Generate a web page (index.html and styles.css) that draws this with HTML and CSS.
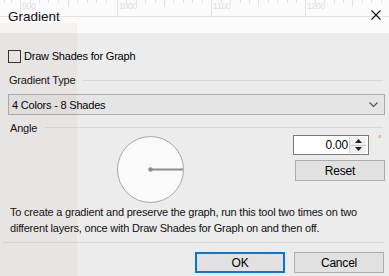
FILE: index.html
```html
<!DOCTYPE html>
<html>
<head>
<meta charset="utf-8">
<link rel="stylesheet" href="styles.css">
</head>
<body>
<div class="dialog">
  <div class="titlebar">
    <svg class="ruler" width="389" height="17" viewBox="0 0 389 17">
      <g stroke="#e2e2e2" stroke-width="1">
        <line x1="0" y1="16.5" x2="389" y2="16.5"/>
        <line x1="20.5" y1="0" x2="20.5" y2="16"/>
        <line x1="117.5" y1="0" x2="117.5" y2="16"/>
        <line x1="211.5" y1="0" x2="211.5" y2="16"/>
        <line x1="305.5" y1="0" x2="305.5" y2="16"/>
        <line x1="4.5" y1="0" x2="4.5" y2="3"/>
        <line x1="11.5" y1="0" x2="11.5" y2="3"/>
        <line x1="30.5" y1="0" x2="30.5" y2="3"/>
        <line x1="39.5" y1="0" x2="39.5" y2="3"/>
        <line x1="48.5" y1="0" x2="48.5" y2="3"/>
        <line x1="58.5" y1="0" x2="58.5" y2="3"/>
        <line x1="68.5" y1="0" x2="68.5" y2="7"/>
        <line x1="77.5" y1="0" x2="77.5" y2="3"/>
        <line x1="87.5" y1="0" x2="87.5" y2="3"/>
        <line x1="96.5" y1="0" x2="96.5" y2="3"/>
        <line x1="106.5" y1="0" x2="106.5" y2="3"/>
        <line x1="126.5" y1="0" x2="126.5" y2="3"/>
        <line x1="136.5" y1="0" x2="136.5" y2="3"/>
        <line x1="145.5" y1="0" x2="145.5" y2="3"/>
        <line x1="155.5" y1="0" x2="155.5" y2="3"/>
        <line x1="164.5" y1="0" x2="164.5" y2="7"/>
        <line x1="173.5" y1="0" x2="173.5" y2="3"/>
        <line x1="183.5" y1="0" x2="183.5" y2="3"/>
        <line x1="192.5" y1="0" x2="192.5" y2="3"/>
        <line x1="202.5" y1="0" x2="202.5" y2="3"/>
        <line x1="221.5" y1="0" x2="221.5" y2="3"/>
        <line x1="230.5" y1="0" x2="230.5" y2="3"/>
        <line x1="240.5" y1="0" x2="240.5" y2="3"/>
        <line x1="249.5" y1="0" x2="249.5" y2="3"/>
        <line x1="258.5" y1="0" x2="258.5" y2="7"/>
        <line x1="268.5" y1="0" x2="268.5" y2="3"/>
        <line x1="277.5" y1="0" x2="277.5" y2="3"/>
        <line x1="287.5" y1="0" x2="287.5" y2="3"/>
        <line x1="296.5" y1="0" x2="296.5" y2="3"/>
        <line x1="315.5" y1="0" x2="315.5" y2="3"/>
        <line x1="324.5" y1="0" x2="324.5" y2="3"/>
        <line x1="334.5" y1="0" x2="334.5" y2="3"/>
        <line x1="343.5" y1="0" x2="343.5" y2="3"/>
        <line x1="352.5" y1="0" x2="352.5" y2="7"/>
        <line x1="362.5" y1="0" x2="362.5" y2="3"/>
        <line x1="371.5" y1="0" x2="371.5" y2="3"/>
        <line x1="381.5" y1="0" x2="381.5" y2="3"/>
      </g>
      <g fill="#e0e0e0" font-family="Liberation Sans, sans-serif" font-size="8.5">
        <text x="22" y="8.5">900</text>
        <text x="119" y="8.5">1000</text>
        <text x="213" y="8.5">1100</text>
        <text x="307" y="8.5">1200</text>
      </g>
    </svg>
    <span class="title">Gradient</span>
    <svg class="close" width="10" height="10" viewBox="0 0 10 10">
      <path d="M0.5 0.5 L9.5 9.5 M9.5 0.5 L0.5 9.5" stroke="#111" stroke-width="1.1" fill="none"/>
    </svg>
  </div>
  <div class="content">
    <label class="check-row">
      <span class="checkbox"></span>
      <span>Draw Shades for Graph</span>
    </label>
    <div class="group-label">
      <span>Gradient Type</span>
      <span class="rule"></span>
    </div>
    <div class="select">
      <span>4 Colors - 8 Shades</span>
      <svg width="9" height="5" viewBox="0 0 9 5"><path d="M0.5 0.5 L4.5 4.5 L8.5 0.5" stroke="#555" stroke-width="1.1" fill="none"/></svg>
    </div>
    <div class="group-label angle-label">
      <span>Angle</span>
      <span class="rule"></span>
    </div>
    <div class="angle-area">
      <div class="dial">
        <svg width="69" height="69" viewBox="0 0 69 69">
          <circle cx="34.5" cy="34.5" r="33" fill="#fafafa" stroke="#a8a8a8" stroke-width="1"/>
          <line x1="34.5" y1="34.5" x2="67" y2="34.5" stroke="#8e8e8e" stroke-width="2"/>
          <circle cx="34.5" cy="34.5" r="2.3" fill="#8e8e8e"/>
        </svg>
      </div>
      <div class="controls">
        <div class="num-row">
          <div class="numeric">
            <span class="value">0.00</span>
            <div class="spin">
              <div class="spin-btn"><svg width="7" height="4" viewBox="0 0 7 4"><path d="M0 4 L3.5 0 L7 4Z" fill="#222"/></svg></div>
              <div class="spin-btn"><svg width="7" height="4" viewBox="0 0 7 4"><path d="M0 0 L3.5 4 L7 0Z" fill="#222"/></svg></div>
            </div>
          </div>
          <span class="deg">°</span>
        </div>
        <button class="btn reset">Reset</button>
      </div>
    </div>
    <p class="note">To create a gradient and preserve the graph, run this tool two times on two different layers, once with Draw Shades for Graph on and then off.</p>
    <div class="footer">
      <button class="btn default">OK</button>
      <button class="btn">Cancel</button>
    </div>
  </div>
  <div class="shade"></div>
</div>
</body>
</html>
```

FILE: styles.css
```css
html, body {
  margin: 0;
  padding: 0;
}
body {
  width: 389px;
  height: 276px;
  overflow: hidden;
  background: #ececec;
  font-family: "Liberation Sans", Arial, sans-serif;
  font-size: 11px;
  letter-spacing: -0.2px;
  color: #000;
}
.dialog {
  position: relative;
  width: 389px;
  height: 276px;
}
.titlebar {
  position: relative;
  height: 33px;
  background: #fbfbfb;
  display: flex;
  align-items: flex-end;
  justify-content: space-between;
  padding: 0 8px 0 8px;
  box-sizing: border-box;
}
.ruler {
  position: absolute;
  left: 0;
  top: 0;
}
.title {
  position: relative;
  font-family: "Liberation Sans", Arial, sans-serif;
  font-size: 13.5px;
  letter-spacing: 0;
  color: #111;
  line-height: 12px;
  margin-bottom: 10px;
}
.close {
  position: relative;
  margin-bottom: 13px;
  margin-right: 0;
}
.content {
  padding: 17px 4px 0 8px;
  display: flex;
  flex-direction: column;
}
.check-row {
  display: flex;
  align-items: center;
  gap: 3px;
  height: 13px;
  line-height: 13px;
}
.checkbox {
  width: 11px;
  height: 11px;
  border: 1px solid #333;
  background: transparent;
}
.group-label {
  display: flex;
  align-items: center;
  gap: 8px;
  margin-top: 10px;
  padding-left: 1px;
  height: 14px;
  color: #111;
}
.group-label .rule {
  flex: 1;
  height: 0;
  border-top: 1px solid #d8d8d8;
  margin-right: 2px;
}
.select {
  margin-top: 7px;
  height: 21px;
  box-sizing: border-box;
  border: 1px solid #adadad;
  background: #e5e5e5;
  display: flex;
  align-items: center;
  justify-content: space-between;
  padding: 0 6px 0 3px;
}
.angle-label {
  margin-top: 6px;
  height: 13px;
}
.angle-label span:first-child {
  margin-left: 1px;
}
.angle-area {
  display: flex;
  margin-top: 0px;
  height: 70px;
}
.dial {
  margin-left: 108px;
  margin-top: 1px;
}
.controls {
  margin-left: auto;
  width: 90px;
  display: flex;
  flex-direction: column;
  gap: 5px;
  margin-top: 1px;
}
.num-row {
  display: flex;
  align-items: flex-start;
  margin-left: -2px;
}
.numeric {
  width: 76px;
  height: 20px;
  box-sizing: border-box;
  border: 1px solid #7a7a7a;
  background: #fff;
  display: flex;
  align-items: center;
  justify-content: flex-end;
  padding: 1px;
  font-size: 12px;
}
.value {
  margin-right: 1px;
}
.spin {
  width: 16px;
  height: 16px;
  display: flex;
  flex-direction: column;
  border-left: 1px solid #d0d0d0;
  margin-right: 1px;
}
.spin-btn {
  flex: 1;
  display: flex;
  align-items: center;
  justify-content: center;
  background: #f0f0f0;
  border-bottom: 1px solid #c8c8c8;
}
.spin-btn:last-child {
  border-bottom: none;
}
.deg {
  color: #c08040;
  font-size: 9px;
  margin-left: 9px;
  margin-top: -1px;
}
.btn {
  height: 21px;
  width: 90px;
  box-sizing: border-box;
  border: 1px solid #adadad;
  background: #e1e1e1;
  font-family: inherit;
  font-size: 12px;
  letter-spacing: -0.2px;
  color: #000;
  padding: 0;
}
.note {
  margin: 0;
  padding-left: 2px;
  line-height: 16px;
  color: #111;
}
.footer {
  margin: 6px 0 0 -5px;
  border-top: 1px solid #dadada;
  padding-top: 9px;
  display: flex;
  justify-content: flex-end;
  gap: 9px;
  padding-right: 1px;
}
.btn.default {
  border: 2px solid #0078d7;
}
.shade {
  position: absolute;
  left: 0;
  top: 23px;
  width: 77px;
  height: 253px;
  background: rgba(110, 90, 70, 0.05);
  pointer-events: none;
}
```
